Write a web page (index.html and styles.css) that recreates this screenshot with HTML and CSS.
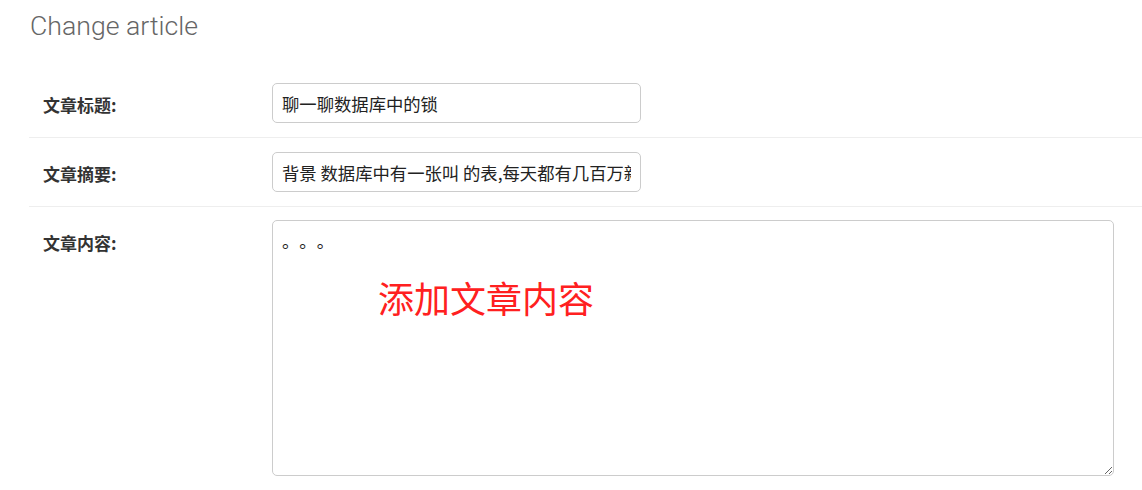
FILE: index.html
```html
<!DOCTYPE html>
<html lang="zh-CN">
<head>
    <meta charset="UTF-8">
    <meta name="viewport" content="width=device-width, initial-scale=1.0">
    <title>Change article</title>
    <link rel="stylesheet" href="styles.css">
</head>
<body>
    <!-- Content Section -->
    <div id="content">
        <h1>Change article</h1>

        <form id="article_form">
            <fieldset class="module">
                <div class="form-row">
                    <label for="id_title">文章标题:</label>
                    <input type="text" id="id_title" class="vTextField" value="聊一聊数据库中的锁">
                </div>
                <div class="form-row">
                    <label for="id_desc">文章摘要:</label>
                    <input type="text" id="id_desc" class="vTextField" value="背景 数据库中有一张叫 的表,每天都有几百万新增数据">
                </div>
                <div class="form-row last">
                    <label for="id_content">文章内容:</label>
                    <div class="textarea-wrap">
                        <textarea id="id_content" class="vLargeTextField">。。。</textarea>
                        <span class="note">添加文章内容</span>
                    </div>
                </div>
            </fieldset>
        </form>
    </div>
</body>
</html>
```

FILE: styles.css
```css
body {
    margin: 0;
    font-family: Roboto, "Noto Sans CJK SC", sans-serif;
    color: #333;
    background-color: #fff;
}

#content {
    padding-left: 29px;
}

h1 {
    margin: 10px 0 27px 1px;
    font-size: 26.67px;
    font-weight: 300;
    color: #666;
}

/* Form Styles */
fieldset.module {
    margin: 0;
    padding: 0;
    border: none;
}

.form-row {
    display: flex;
    align-items: flex-start;
    padding: 14px 14px;
    border-bottom: 1px solid #eee;
}

.form-row.last {
    padding-top: 13px;
}

.form-row label {
    flex: 0 0 229px;
    padding-top: 12px;
    line-height: 20px;
    font-family: "Noto Sans CJK SC", sans-serif;
    font-size: 17px;
    font-weight: bold;
    color: #333;
}

.form-row.last label {
    padding-top: 13px;
}

.vTextField {
    width: 369px;
    height: 40px;
    box-sizing: border-box;
    padding: 0 9px;
    margin: 0;
    border: 1px solid #ccc;
    border-radius: 5px;
    font-family: "Noto Sans CJK SC", sans-serif;
    font-size: 17.33px;
    color: #222;
    outline: none;
}

.textarea-wrap {
    position: relative;
}

.vLargeTextField {
    display: block;
    width: 842px;
    height: 256px;
    box-sizing: border-box;
    margin: 0;
    padding: 7px 9px;
    border: 1px solid #ccc;
    border-radius: 5px;
    font-family: "Noto Sans CJK SC", sans-serif;
    font-size: 17.33px;
    line-height: 26px;
    color: #222;
    text-spacing-trim: space-all;
    outline: none;
}

/* Red annotation over the textarea */
.note {
    position: absolute;
    left: 106px;
    top: 55px;
    font-family: "Noto Sans CJK SC", sans-serif;
    font-size: 36px;
    line-height: 44px;
    color: #ff2020;
    white-space: nowrap;
}
```
